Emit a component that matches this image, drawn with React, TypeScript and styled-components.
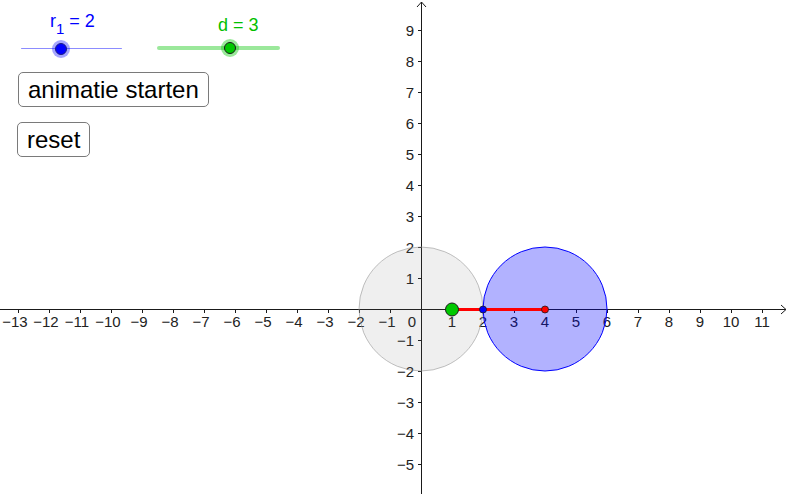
import React from 'react';
import styled, { createGlobalStyle } from 'styled-components';

const GlobalStyle = createGlobalStyle`
  html, body {
    margin: 0;
    padding: 0;
    background: #fff;
  }
  body {
    font-family: "Liberation Sans", Arial, sans-serif;
  }
`;

const Applet = styled.div`
  position: relative;
  width: 789px;
  height: 494px;
  overflow: hidden;
  background: #fff;
`;

const Canvas = styled.svg`
  display: block;
  font-family: "Liberation Sans", Arial, sans-serif;
`;

const Controls = styled.div`
  position: absolute;
  top: 0;
  left: 0;
  display: flex;
  flex-direction: column;
  align-items: flex-start;
`;

const SliderRow = styled.div`
  display: flex;
  align-items: flex-start;
`;

const SliderBox = styled.div<{ $left: number; $width: number }>`
  display: flex;
  flex-direction: column;
  margin-left: ${(p) => p.$left}px;
  width: ${(p) => p.$width}px;
`;

const SliderLabel = styled.div<{ $color: string; $indent: number; $top: number }>`
  height: 20px;
  margin-top: ${(p) => p.$top}px;
  padding-left: ${(p) => p.$indent}px;
  font-size: 18px;
  line-height: 20px;
  color: ${(p) => p.$color};
  white-space: nowrap;

  sub {
    font-size: 15px;
    vertical-align: -7px;
    line-height: 0;
  }
`;

const Track = styled.div<{ $thick: number; $color: string; $top: number }>`
  position: relative;
  margin-top: ${(p) => p.$top}px;
  height: ${(p) => p.$thick}px;
  border-radius: ${(p) => p.$thick / 2}px;
  background: ${(p) => p.$color};
`;

const Knob = styled.div<{ $fill: string; $halo: string; $border: string }>`
  position: absolute;
  top: 50%;
  width: 10px;
  height: 10px;
  margin: -6px 0 0 -6px;
  border-radius: 50%;
  border: 1px solid ${(p) => p.$border};
  background: ${(p) => p.$fill};
  box-shadow: 0 0 0 3px ${(p) => p.$halo};
`;

const Button = styled.button<{ $left: number; $top: number }>`
  margin-left: ${(p) => p.$left}px;
  margin-top: ${(p) => p.$top}px;
  height: 35px;
  padding: 0 9px;
  border: 1.5px solid #7a7a7a;
  border-radius: 5px;
  background: #fff;
  color: #000;
  font-family: "Liberation Sans", Arial, sans-serif;
  font-size: 24px;
  line-height: 33px;
  cursor: pointer;
`;

const ox = 421;
const oy = 309;
const s = 31;
const X = (v: number) => ox + v * s;
const Y = (v: number) => oy - v * s;

const xs = Array.from({ length: 25 }, (_, i) => i - 13).filter((v) => v !== 0);
const ys = Array.from({ length: 15 }, (_, i) => i - 5).filter((v) => v !== 0);
const label = (v: number) => (v < 0 ? `\u2212${-v}` : `${v}`);

const Graph: React.FC = () => (
  <Canvas width={789} height={494} viewBox="0 0 789 494">
    {/* axes */}
    <g stroke="#1a1a1a" strokeWidth={1} fill="none">
      <line x1={0} y1={oy + 0.5} x2={786} y2={oy + 0.5} />
      <polyline points={`${781},${oy - 4} ${786},${oy + 0.5} ${781},${oy + 5}`} />
      <line x1={ox + 0.5} y1={494} x2={ox + 0.5} y2={2} />
      <polyline points={`${ox - 4},${7} ${ox + 0.5},${2} ${ox + 5},${7}`} />
      {xs.map((v) => (
        <line key={`tx${v}`} x1={X(v) + 0.5} y1={oy} x2={X(v) + 0.5} y2={oy + 4} />
      ))}
      {ys.map((v) => (
        <line key={`ty${v}`} x1={ox - 3} y1={Y(v) + 0.5} x2={ox + 1} y2={Y(v) + 0.5} />
      ))}
    </g>
    <g fill="#222" fontSize={15}>
      {xs.map((v) => (
        <text key={`lx${v}`} x={X(v) - (v < 0 ? 3 : 0)} y={oy + 18} textAnchor="middle">
          {label(v)}
        </text>
      ))}
      <text x={ox - 9} y={oy + 18} textAnchor="middle">0</text>
      {ys.map((v) => (
        <text key={`ly${v}`} x={ox - 7} y={Y(v) + 5.5} textAnchor="end">
          {label(v)}
        </text>
      ))}
    </g>

    {/* circles */}
    <circle cx={X(0)} cy={oy} r={2 * s} fill="rgba(110,110,110,0.11)" stroke="rgba(150,150,150,0.6)" strokeWidth={1} />
    <circle cx={X(4)} cy={oy} r={2 * s} fill="rgba(0,0,255,0.3)" stroke="#0000ff" strokeWidth={1} />

    {/* segment and points */}
    <line x1={X(1)} y1={oy + 0.5} x2={X(4)} y2={oy + 0.5} stroke="#ff0000" strokeWidth={3} />
    <circle cx={X(1)} cy={oy + 0.5} r={6.5} fill="#00c800" stroke="#1a1a1a" strokeWidth={1} />
    <circle cx={X(2)} cy={oy + 0.5} r={3.5} fill="#0000ff" stroke="#1a1a1a" strokeWidth={0.8} />
    <circle cx={X(4)} cy={oy + 0.5} r={3.5} fill="#ff0000" stroke="#1a1a1a" strokeWidth={0.8} />
  </Canvas>
);

const App: React.FC = () => (
  <Applet>
    <GlobalStyle />
    <Graph />
    <Controls>
      <SliderRow>
        <SliderBox $left={21} $width={101}>
          <SliderLabel $color="#0000ff" $indent={29} $top={11}>
            r<sub>1</sub> = 2
          </SliderLabel>
          <Track $thick={1} $color="#8c8cff" $top={17}>
            <Knob style={{ left: '39.6%' }} $fill="#0000ff" $border="#1c1c80" $halo="rgba(0,0,255,0.35)" />
          </Track>
        </SliderBox>
        <SliderBox $left={35} $width={123}>
          <SliderLabel $color="#00c000" $indent={61} $top={15}>
            d = 3
          </SliderLabel>
          <Track $thick={4} $color="#9be89b" $top={11}>
            <Knob style={{ left: '59.3%' }} $fill="#00c800" $border="#1a1a1a" $halo="rgba(0,200,0,0.4)" />
          </Track>
        </SliderBox>
      </SliderRow>
      <Button $left={18} $top={22}>animatie starten</Button>
      <Button $left={17} $top={15}>reset</Button>
    </Controls>
  </Applet>
);

export default App;
